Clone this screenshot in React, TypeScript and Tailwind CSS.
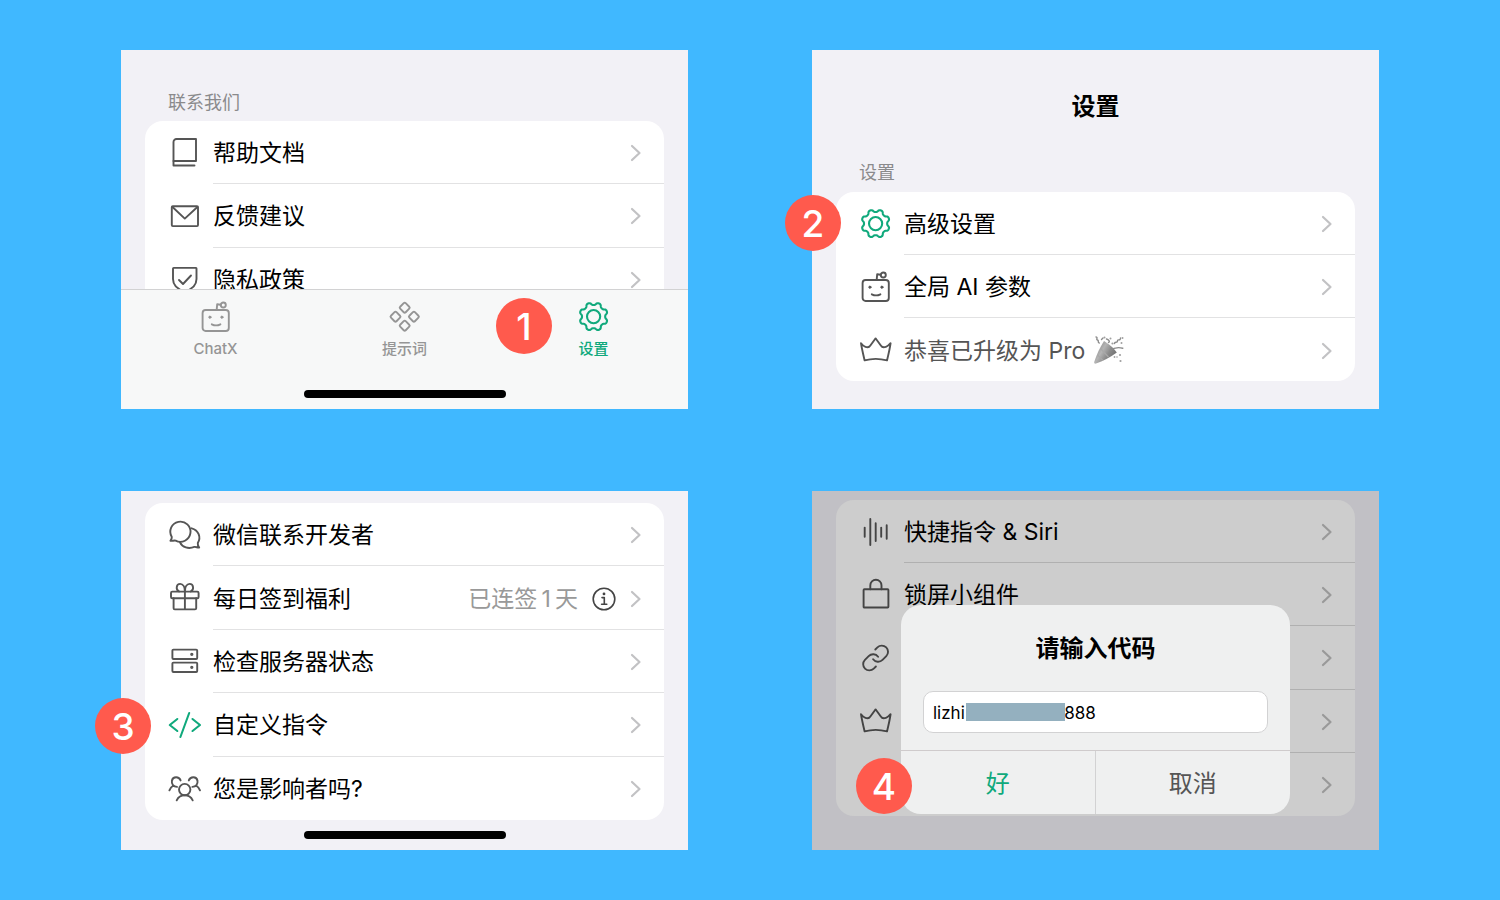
import type { ReactNode } from "react";

function Icon({ children, className = "text-[#555555]" }: { children: ReactNode; className?: string }) {
  return (
    <svg
      viewBox="0 0 32 32"
      fill="none"
      stroke="currentColor"
      strokeWidth="1.9"
      strokeLinecap="round"
      strokeLinejoin="round"
      aria-hidden="true"
      className={`size-8 shrink-0 overflow-visible ${className}`}
    >
      {children}
    </svg>
  );
}

/* Outline of an eight-lobed cog, sampled around the circle. */
const cogPath =
  Array.from({ length: 160 }, (_, i) => {
    const t = (i / 160) * Math.PI * 2;
    const wave = Math.tanh(1.5 * Math.cos(8 * t)) / Math.tanh(1.5);
    const r = 12.9 - 1.3 * wave;
    return `${i === 0 ? "M" : "L"}${(15.6 + r * Math.cos(t)).toFixed(2)} ${(15.6 + r * Math.sin(t)).toFixed(2)}`;
  }).join("") + "Z";

const shapes = {
  book: (
    <>
      <path d="M27 24H4.5V5a3 3 0 0 1 3-3H27Z" />
      <path d="M4.5 24v4.5h21" />
    </>
  ),
  mail: (
    <>
      <rect x="2.8" y="6.3" width="26.2" height="19.8" rx="1" />
      <path d="M3.5 7L15.8 18.6L28.4 7" />
    </>
  ),
  shield: (
    <>
      <path d="M4.7 4.9H27q.5 0 .5.6V16c0 6-5 10.5-11.7 12.5C9 26.5 4 22 4 16V5.5q0-.6.7-.6Z" />
      <path d="M10 17l4 4l8-8.5" />
    </>
  ),
  robot: (
    <>
      <rect x="2.6" y="9" width="26.2" height="21" rx="3" />
      <path d="M16.7 8.7L17.2 3.2L20.6 3.7" />
      <circle cx="23.3" cy="4" r="2.5" />
      <circle cx="9.9" cy="16.2" r="1.1" fill="currentColor" strokeWidth="1" />
      <circle cx="21.9" cy="16.2" r="1.1" fill="currentColor" strokeWidth="1" />
      <path d="M11.8 23.3Q16 25.5 20.4 23.3" />
    </>
  ),
  cog: (
    <g strokeWidth="2.1">
      <path d={cogPath} />
      <circle cx="15.6" cy="15.6" r="6.6" />
    </g>
  ),
  tiles: (
    <>
      <rect x="11.8" y="2.8" width="7.8" height="7.8" rx="1.4" transform="rotate(45 15.7 6.7)" />
      <rect x="11.8" y="20.8" width="7.8" height="7.8" rx="1.4" transform="rotate(45 15.7 24.7)" />
      <rect x="2.6" y="11.8" width="7.8" height="7.8" rx="1.4" transform="rotate(45 6.5 15.7)" />
      <rect x="21" y="11.8" width="7.8" height="7.8" rx="1.4" transform="rotate(45 24.9 15.7)" />
    </>
  ),
  crown: (
    <path d="M1 9.2C3.6 12.8 7.4 14 9.4 12.6C11 11.2 13.2 7.4 15.6 4.4C18 7.4 20.2 11.2 21.8 12.6C23.8 14 27.8 12.8 30.6 9.2C29.8 15 28.4 20.8 27 26.4C19.6 24.4 11.8 24.4 4.6 26.4C3.4 20.8 1.8 15 1 9.2Z" />
  ),
  chat: (
    <>
      <path d="M1.4 21.8C2.4 20.6 2.9 19.3 2.8 18A10.1 10.1 0 1 1 6.6 21.6C5 21.3 3 22.1 1.4 21.8Z" />
      <path d="M22.7 9.3C29.6 11 32.3 18.5 28.8 24C28.6 25.6 29.3 27.4 30.2 28.6C28.6 28.9 27 27.6 25.4 27.9C19.5 30.3 13.3 28.4 11 23.4" />
    </>
  ),
  gift: (
    <>
      <rect x="2" y="9.6" width="27.6" height="6.6" rx="1.3" />
      <path d="M4.6 16.2V26.2q0 1.2 1.2 1.2H26q1.2 0 1.2-1.2V16.2M15.9 9.6V27.4" />
      <path d="M15.9 9.4C15.9 5 14 1.9 11.2 1.9C7 1.9 6.6 8 10 9.4M15.9 9.4C15.9 5 17.8 1.9 20.6 1.9C24.8 1.9 25.2 8 21.8 9.4" />
    </>
  ),
  server: (
    <>
      <rect x="3.4" y="4.6" width="24.8" height="9.4" rx="1" />
      <rect x="3.4" y="17.6" width="24.8" height="9.4" rx="1" />
      <circle cx="22.8" cy="9.3" r=".7" fill="currentColor" />
      <circle cx="22.8" cy="22.3" r=".7" fill="currentColor" />
    </>
  ),
  code: (
    <g strokeWidth="2.1">
      <path d="M8.3 10L.8 16L8.3 22M23.5 10L31 16L23.5 22" />
      <path d="M20.2 4L11.4 28" />
    </g>
  ),
  people: (
    <>
      <circle cx="15.7" cy="17.6" r="5.7" />
      <path d="M7.7 28.3C9.5 24.7 12.3 23.3 15.7 23.3C19.1 23.3 21.9 24.7 23.7 28.3" />
      <path d="M11.6 8.4C10 4.2 3.9 4.2 2.9 8.7C2.3 12.2 4.6 14.7 8 14.9M4.4 13.5C2.6 14.6 1.3 16.2 .4 18.3" />
      <path d="M19.8 8.4C21.4 4.2 27.5 4.2 28.5 8.7C29.1 12.2 26.8 14.7 23.4 14.9M27 13.5C28.8 14.6 30.1 16.2 31 18.3" />
    </>
  ),
  wave: <path d="M4.7 11.6V20.8M10.3 3V29M15.7 7.3V25M21.2 11.6V20.8M26.7 9.3V22.7" />,
  bag: (
    <>
      <rect x="3.6" y="10.3" width="24.8" height="18.2" rx=".8" />
      <path d="M10.3 10.3V6.4a5.6 5.6 0 0 1 11.2 0V10.3" />
    </>
  ),
  link: (
    <g transform="translate(.6 1) scale(1.25)" strokeWidth="1.5">
      <path d="M10 13a5 5 0 0 0 7.54.54l3-3a5 5 0 0 0-7.07-7.07l-1.72 1.71" />
      <path d="M14 11a5 5 0 0 0-7.54-.54l-3 3a5 5 0 0 0 7.07 7.07l1.71-1.71" />
    </g>
  ),
};

function Popper() {
  return (
    <svg viewBox="0 0 32 32" role="img" aria-label="🎉" className="size-8 shrink-0">
      <defs>
        <linearGradient id="cone" x1="0" y1="0" x2="1" y2=".6">
          <stop offset="0" stopColor="#787878" />
          <stop offset=".45" stopColor="#b4b4b4" />
          <stop offset=".7" stopColor="#8c8c8c" />
          <stop offset="1" stopColor="#6e6e6e" />
        </linearGradient>
      </defs>
      <path d="M12 6C16 8.500 22 13 24.800 17.600C18 22.500 11 26.500 4 28.600C2.600 28.900 1.900 28.200 2.300 26.800C4.500 19.500 8 12.500 12 6Z" fill="url(#cone)" />
      <path d="M5.500 20L11 25.500M8.500 13.500L16.500 22" stroke="#a8a8a8" strokeWidth="1.200" />
      <g fill="none" stroke="#8c8c8c" strokeWidth="1.400" strokeLinecap="round">
        <path d="M18 15.500C22 12.500 26 12 30.800 13.200" />
        <path d="M4 2C6.500 2.500 3.500 4.500 5.500 5C7.500 5.500 5 7.500 7.200 8M9.500 4.500L11 3" />
        <path d="M16.500 7.500C18.500 6.500 16.500 4.500 14.500 4" />
        <path d="M22.500 8.500C22.500 6 25.500 8.500 25.500 6C25.500 3.500 28.500 6.500 28.500 3" />
      </g>
      <g fill="#a0a0a0">
        <circle cx="12.500" cy="2.500" r="1" />
        <circle cx="18.500" cy="3.500" r="1" />
        <circle cx="20.500" cy="8.500" r="1.100" />
        <circle cx="30.500" cy="3" r="1" />
        <circle cx="29.500" cy="8" r="1" />
        <circle cx="22.500" cy="22" r=".9" />
        <circle cx="28" cy="20" r="1.100" />
        <circle cx="28.500" cy="26" r="1.100" />
        <circle cx="25" cy="22" r=".8" />
      </g>
    </svg>
  );
}

function Chevron({ dim }: { dim?: boolean }) {
  return (
    <svg
      viewBox="0 0 12 18"
      fill="none"
      stroke="currentColor"
      strokeWidth="2.2"
      strokeLinecap="round"
      strokeLinejoin="round"
      aria-hidden="true"
      className={`h-[18px] w-3 shrink-0 ${dim ? "text-[#999999]" : "text-[#c2c2c4]"}`}
    >
      <path d="M2 2L9.500 9L2 16" />
    </svg>
  );
}

type Item = {
  icon: keyof typeof shapes;
  label: string;
  active?: boolean;
  muted?: boolean;
  extra?: ReactNode;
  suffix?: ReactNode;
};

function List({ items, dim }: { items: Item[]; dim?: boolean }) {
  return (
    <ul className={`grid flex-1 auto-rows-fr rounded-[18px] ${dim ? "bg-[#cdcdcd]" : "bg-white"}`}>
      {items.map((item, i) => (
        <li key={i} className="flex">
          <button type="button" className="flex flex-1 items-center gap-3 pl-6 text-left">
            <Icon className={item.active ? "text-[#10a97c]" : dim ? "text-[#444444]" : "text-[#555555]"}>
              {shapes[item.icon]}
            </Icon>
            <span
              className={`flex flex-1 items-center gap-[10px] self-stretch pt-0.5 pr-[22px] ${
                i < items.length - 1 ? (dim ? "border-b border-[#b0b0b0]" : "border-b border-[#e2e2e3]") : ""
              }`}
            >
              <span className={`flex flex-1 items-center gap-[7px] text-[23px] leading-8 ${item.muted ? "text-[#555555]" : "text-black"}`}>
                {item.label}
                {item.suffix}
              </span>
              {item.extra}
              <Chevron dim={dim} />
            </span>
          </button>
        </li>
      ))}
    </ul>
  );
}

function Badge({ n, className }: { n: number; className: string }) {
  return (
    <span
      className={`absolute z-10 flex size-14 items-center justify-center rounded-full bg-[#ff5a4d] text-[37px] leading-none font-medium text-white ${className}`}
    >
      {n}
    </span>
  );
}

function HomeBar() {
  return <div className="absolute bottom-[11px] left-1/2 h-2 w-[202px] -translate-x-1/2 rounded-full bg-black" />;
}

function Tab({ icon, label, active }: { icon: keyof typeof shapes; label: string; active?: boolean }) {
  return (
    <button
      type="button"
      className={`flex flex-col items-center gap-1.5 self-start text-[15px] leading-5 font-medium ${active ? "text-[#10a97c]" : "text-[#959595]"}`}
    >
      <Icon className="text-inherit">{shapes[icon]}</Icon>
      {label}
    </button>
  );
}

const contactItems: Item[] = [
  { icon: "book", label: "帮助文档" },
  { icon: "mail", label: "反馈建议" },
  { icon: "shield", label: "隐私政策" },
];

const settingItems: Item[] = [
  { icon: "cog", label: "高级设置", active: true },
  { icon: "robot", label: "全局 AI 参数" },
  { icon: "crown", label: "恭喜已升级为 Pro", muted: true, suffix: <Popper /> },
];

const moreItems: Item[] = [
  { icon: "chat", label: "微信联系开发者" },
  {
    icon: "gift",
    label: "每日签到福利",
    extra: (
      <span className="flex items-center gap-[10px] text-[23px] leading-8 text-[#999999]">
        {"已连签\u20091\u2009天"}
        <Icon className="text-[#444444]">
          <circle cx="16" cy="16" r="10.800" strokeWidth="1.600" />
          <circle cx="16" cy="10.900" r="1.400" fill="currentColor" stroke="none" />
          <path d="M14 14.600h2.300v6.400M13.600 21.200h5.200" strokeWidth="1.600" />
        </Icon>
      </span>
    ),
  },
  { icon: "server", label: "检查服务器状态" },
  { icon: "code", label: "自定义指令", active: true },
  { icon: "people", label: "您是影响者吗?" },
];

const shortcutItems: Item[] = [
  { icon: "wave", label: "快捷指令 & Siri" },
  { icon: "bag", label: "锁屏小组件" },
  { icon: "link", label: "" },
  { icon: "crown", label: "" },
  { icon: "crown", label: "" },
];

export default function App() {
  return (
    <main
      lang="zh-CN"
      className="grid min-h-screen auto-rows-fr grid-cols-2 gap-x-[124px] gap-y-[82px] bg-[#40b8ff] px-[121px] py-[50px] font-['Inter','Noto_Sans_CJK_SC',sans-serif]"
    >
      <section className="relative flex flex-col bg-[#f2f1f6] px-6 pb-[98px]">
        <h2 className="px-[23px] pt-[41px] pb-1.5 text-lg leading-6 text-[#8a8a8c]">联系我们</h2>
        <List items={contactItems} />
        <nav className="absolute inset-x-0 bottom-0 grid h-[120px] grid-cols-3 border-t border-[#d2d2d3] bg-[#f7f8f8] pt-[11px]">
          <Tab icon="robot" label="ChatX" />
          <Tab icon="tiles" label="提示词" />
          <Tab icon="cog" label="设置" active />
        </nav>
        <HomeBar />
        <Badge n={1} className="right-[136px] bottom-[55px]" />
      </section>

      <section className="relative flex flex-col bg-[#f2f1f6] px-6 pb-7">
        <h1 className="pt-[41px] text-center text-2xl leading-8 font-bold text-black">设置</h1>
        <h2 className="px-[23px] pt-[38px] pb-[7px] text-lg leading-6 text-[#8a8a8c]">设置</h2>
        <List items={settingItems} />
        <Badge n={2} className="top-[145px] -left-[27px]" />
      </section>

      <section className="relative flex flex-col bg-[#f2f1f6] px-6 pt-3 pb-[30px]">
        <List items={moreItems} />
        <HomeBar />
        <Badge n={3} className="top-[207px] -left-[26px]" />
      </section>

      <section className="relative flex flex-col bg-[#c1c0c5] px-6 pt-[9px] pb-[34px]">
        <List items={shortcutItems} dim />
        <div
          role="dialog"
          aria-labelledby="code-title"
          className="absolute inset-x-[89px] bottom-9 flex flex-col overflow-hidden rounded-[20px] bg-[#eff0f0]"
        >
          <h2 id="code-title" className="pt-7 text-center text-2xl leading-8 font-bold text-black">
            请输入代码
          </h2>
          <div className="relative mx-[22px] mt-[26px] mb-[17px]">
            <input
              type="text"
              aria-labelledby="code-title"
              defaultValue={"lizhi\u2003\u2003\u2003\u2003\u2003\u00a0\u00a0\u00a0888"}
              className="h-[42px] w-full rounded-[10px] border border-[#d2d2d3] bg-white px-[9px] pt-0.5 text-[17px] text-black outline-none"
            />
            <span className="absolute top-3 left-[43px] h-[18px] w-[99px] bg-[#94b0bf]" />
          </div>
          <div className="grid h-16 grid-cols-2 border-t border-[#cfcbcc] pt-0.5 text-2xl">
            <button type="button" className="-mt-0.5 border-r border-[#d2d2d3] pt-0.5 text-[#10a97c]">
              好
            </button>
            <button type="button" className="text-[#555555]">
              取消
            </button>
          </div>
        </div>
        <Badge n={4} className="bottom-9 left-11" />
      </section>
    </main>
  );
}
